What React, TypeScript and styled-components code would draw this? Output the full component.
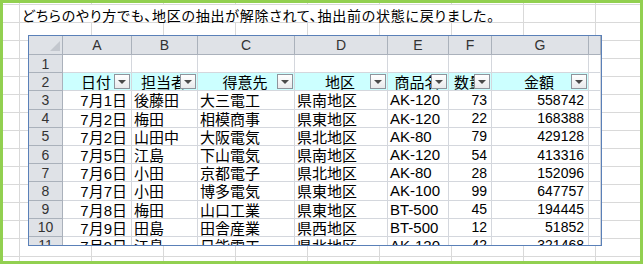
import styled, { createGlobalStyle } from 'styled-components';

const GlobalStyle = createGlobalStyle`
  body {
    margin: 0;
    background: #fff;
  }
`;

const columns = ['A', 'B', 'C', 'D', 'E', 'F', 'G'];
const widths = [69, 66, 97, 93, 61, 43, 97];

const fields = ['日付', '担当者', '得意先', '地区', '商品名', '数量', '金額'];

// right aligned columns: date, quantity, amount
const rightAligned = [true, false, false, false, false, true, true];
const numeric = [false, false, false, false, false, true, true];

const rows: string[][] = [
  ['7月1日', '後藤田', '大三電工', '県南地区', 'AK-120', '73', '558742'],
  ['7月2日', '梅田', '相模商事', '県東地区', 'AK-120', '22', '168388'],
  ['7月2日', '山田中', '大阪電気', '県北地区', 'AK-80', '79', '429128'],
  ['7月5日', '江島', '下山電気', '県南地区', 'AK-120', '54', '413316'],
  ['7月6日', '小田', '京都電子', '県北地区', 'AK-80', '28', '152096'],
  ['7月7日', '小田', '博多電気', '県東地区', 'AK-100', '99', '647757'],
  ['7月8日', '梅田', '山口工業', '県東地区', 'BT-500', '45', '194445'],
  ['7月9日', '田島', '田舎産業', '県西地区', 'BT-500', '12', '51852'],
  ['7月9日', '江島', '日能電工', '県北地区', 'AK-120', '42', '321468'],
];

const Frame = styled.div`
  width: 643px;
  height: 264px;
  box-sizing: border-box;
  border: 3px solid #92d050;
  overflow: hidden;
  display: flex;
  flex-direction: column;
  background-color: #fff;
  background-image: linear-gradient(to right, #d9d9d9 1px, transparent 1px),
    linear-gradient(to bottom, #d9d9d9 1px, transparent 1px);
  background-size: 72px 100%, 100% 18px;
  background-position: 16px 0, 0 1px;
`;

const Caption = styled.div`
  margin: 2px 0 0 17px;
  width: 503px;
  height: 17px;
  box-sizing: border-box;
  padding: 2px 0 0 2px;
  background: #fff;
  font-family: 'Noto Sans CJK JP', sans-serif;
  font-size: 14px;
  line-height: 16px;
  letter-spacing: 0.75px;
  font-feature-settings: 'palt';
  color: #000;
  white-space: nowrap;
`;

const Window = styled.div`
  margin: 13px 0 0 25px;
  width: 574px;
  height: 211px;
  box-sizing: border-box;
  border: 1px solid #5a80b8;
  background: #fff;
  overflow: hidden;
  display: grid;
  grid-template-columns: 34px ${widths.map((w) => `${w}px`).join(' ')} 12px;
  grid-template-rows: 19px repeat(11, 18.2px);
`;

const Cell = styled.div<{ $align?: 'left' | 'right' | 'center'; $fill?: boolean; $num?: boolean }>`
  position: relative;
  box-sizing: border-box;
  border-right: 1px solid #d4d7dd;
  border-bottom: 1px solid #d4d7dd;
  background: ${(p) => (p.$fill ? '#ccffff' : '#fff')};
  display: flex;
  align-items: center;
  justify-content: ${(p) =>
    p.$align === 'right' ? 'flex-end' : p.$align === 'center' ? 'center' : 'flex-start'};
  padding: 0 4px 0 2px;
  font-family: 'Liberation Sans', 'Noto Sans CJK JP', sans-serif;
  font-size: ${(p) => (p.$num ? '14px' : '15px')};
  color: #000;
  white-space: nowrap;
  overflow: hidden;
`;

const HeadCell = styled.div`
  position: relative;
  box-sizing: border-box;
  border-right: 1px solid #aab1bb;
  border-bottom: 1px solid #aab1bb;
  background: #dfe2e7;
  display: flex;
  align-items: center;
  justify-content: center;
  font-family: 'Liberation Sans', sans-serif;
  font-size: 14px;
  color: #333;
`;

const Corner = styled(HeadCell)`
  svg {
    position: absolute;
    right: 2px;
    bottom: 3px;
  }
`;

const FilterButton = styled.span`
  position: absolute;
  right: 1px;
  top: 1px;
  width: 16px;
  height: 15px;
  box-sizing: border-box;
  border: 1px solid #8e949c;
  background: linear-gradient(#ffffff, #e9eaec);
  display: flex;
  align-items: center;
  justify-content: center;

  &::after {
    content: '';
    border-left: 4px solid transparent;
    border-right: 4px solid transparent;
    border-top: 4px solid #4a4a4a;
    margin-top: 1px;
  }
`;

const Label = styled.span`
  font-family: 'Noto Sans CJK JP', sans-serif;
`;

export default function App() {
  return (
    <>
      <GlobalStyle />
      <Frame>
        <Caption>どちらのやり方でも、地区の抽出が解除されて、抽出前の状態に戻りました。</Caption>
        <Window>
          <Corner>
            <svg width="10" height="10" viewBox="0 0 10 10">
              <polygon points="10,0 10,10 0,10" fill="#c3c7ce" />
            </svg>
          </Corner>
          {columns.map((c) => (
            <HeadCell key={c}>{c}</HeadCell>
          ))}
          <HeadCell />

          <HeadCell>1</HeadCell>
          {columns.map((c) => (
            <Cell key={c} />
          ))}
          <Cell />

          <HeadCell>2</HeadCell>
          {fields.map((f) => (
            <Cell key={f} $align="center" $fill>
              <Label>{f}</Label>
              <FilterButton />
            </Cell>
          ))}
          <Cell />

          {rows.map((r, i) => (
            <Row key={i} n={i + 3} values={r} />
          ))}
        </Window>
      </Frame>
    </>
  );
}

function Row({ n, values }: { n: number; values: string[] }) {
  return (
    <>
      <HeadCell>{n}</HeadCell>
      {values.map((v, j) => (
        <Cell key={j} $align={rightAligned[j] ? 'right' : 'left'} $num={numeric[j]}>
          {v}
        </Cell>
      ))}
      <Cell />
    </>
  );
}
